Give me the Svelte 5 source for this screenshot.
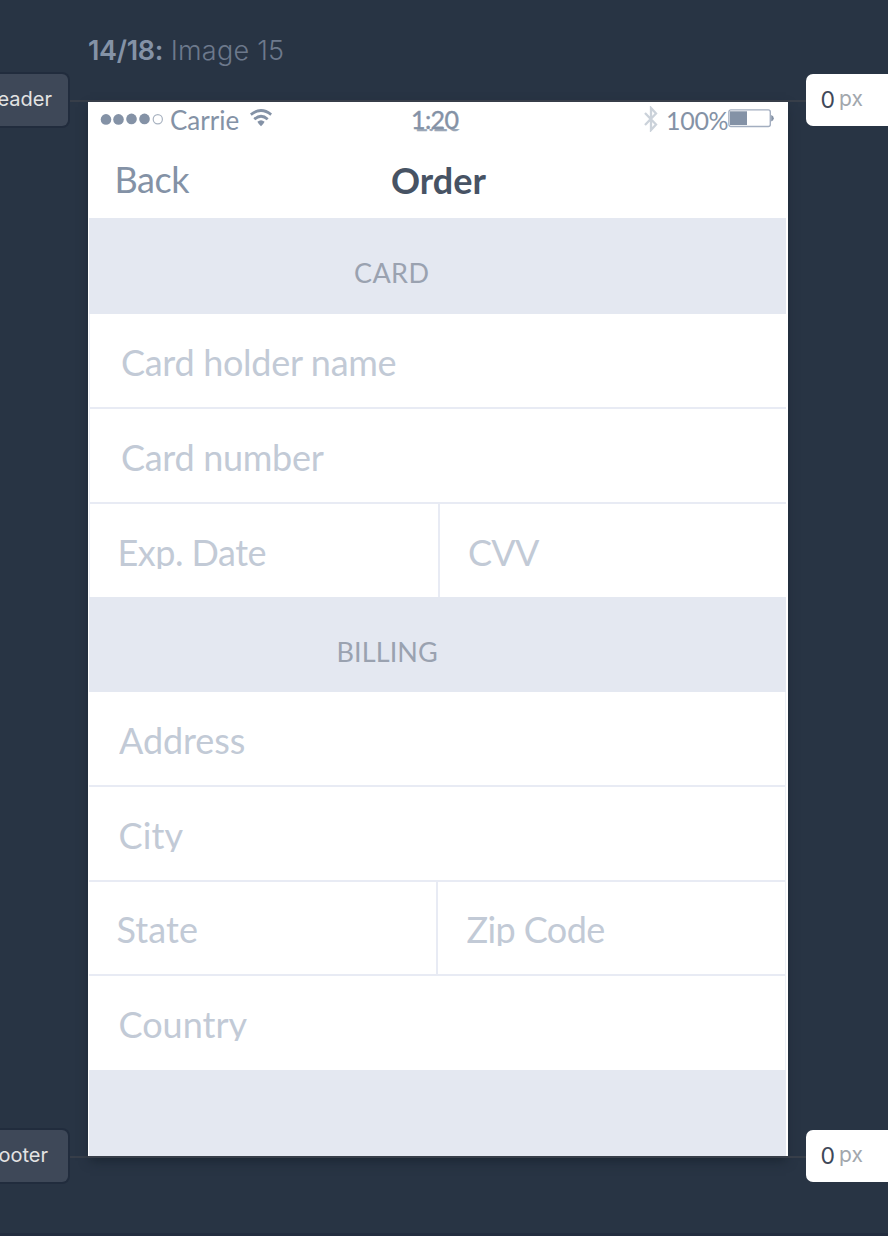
<script>
  const card = [
    [{ t: 'Card holder name', x: 31, s: -0.3 }],
    [{ t: 'Card number', x: 31, s: -0.3 }],
    [{ t: 'Exp. Date', x: 27.5, s: -0.5 }, { t: 'CVV', x: 28, s: -0.7 }]
  ];
  const billing = [
    [{ t: 'Address', x: 30, s: -0.1 }],
    [{ t: 'City', x: 29.5, s: 0.1 }],
    [{ t: 'State', x: 27.5, s: 0.1 }, { t: 'Zip Code', x: 28.5, s: -0.6 }],
    [{ t: 'Country', x: 29.5, s: 0 }]
  ];
</script>

{#snippet fields(rows)}
  {#each rows as row}
    <div class="row">
      {#each row as f}
        <div class="cell" style="padding-left:{f.x}px;letter-spacing:{f.s}px"><span>{f.t}</span></div>
      {/each}
    </div>
  {/each}
{/snippet}

<main>
  <aside class="left">
    <div class="mark"><div class="tag">Header</div><i></i></div>
    <div class="mark"><div class="tag foot">Footer</div><i></i></div>
  </aside>

  <section class="center">
    <h1><b>14/18:</b> <span>Image 15</span></h1>
    <div class="screen">
      <div class="status">
        <svg class="dots" width="64" height="14" viewBox="0 0 64 14">
          <circle cx="6" cy="7.4" r="5.3" /><circle cx="18.5" cy="7.4" r="5.3" />
          <circle cx="31.5" cy="6.9" r="5.3" /><circle cx="44.5" cy="6.9" r="5.3" />
          <circle class="ring" cx="57.8" cy="7.2" r="4.6" />
        </svg>
        <span class="carrier">Carrie</span>
        <svg class="wifi" width="22" height="18" viewBox="0 0 22 18">
          <path d="M.8 5.6Q11-2.6 21.2 5.6" /><path d="M4.3 10.2Q11 4.4 17.7 10.2" />
          <path class="fill" d="M7.4 12.8Q11 9.6 14.6 12.8Q13.6 15 11 17.2Q8.4 15 7.4 12.8Z" />
        </svg>
        <span class="time">1:20</span>
        <svg class="bt" width="14" height="26" viewBox="0 0 14 26">
          <path d="M1 7L12 18.5L7 24V2L12 7.5L1 19" />
        </svg>
        <span class="pct">100%</span>
        <svg class="bat" width="46" height="19" viewBox="0 0 46 19">
          <rect class="case" x=".9" y=".9" width="41.4" height="16.6" rx="2" />
          <rect class="fill" x="2" y="2.3" width="17" height="13.7" />
          <path class="fill" d="M43.2 6Q45.8 7 45.8 9.2T43.2 12.5Z" />
        </svg>
      </div>
      <nav><span class="back">Back</span><strong>Order</strong></nav>
      <h2 class="h-card">CARD</h2>
      <div class="group card">{@render fields(card)}</div>
      <h2 class="h-bill">BILLING</h2>
      <div class="group bill">{@render fields(billing)}</div>
      <div class="end"></div>
    </div>
  </section>

  <aside class="right">
    <div class="mark"><i></i><div class="box"><b>0</b><span>px</span></div></div>
    <div class="mark"><i></i><div class="box"><b>0</b><span>px</span></div></div>
  </aside>
</main>

<style>
  :global(body) { background: #283444; overflow: hidden; }
  main {
    display: grid; grid-template-columns: 88px 700px 100px;
    width: 888px; height: 1236px; box-sizing: border-box; overflow: hidden;
    font-family: Inter, sans-serif; background: #283444; border-bottom: 3px solid #232d3f;
  }
  aside { display: flex; flex-direction: column; gap: 1004px; padding-top: 74px; }
  .mark { display: flex; height: 52px; flex: none; }
  .mark i { width: 18px; height: 2px; margin-top: 26px; background: #373e49; flex: none; }
  .tag {
    width: 68px; margin-right: 2px; display: flex; justify-content: flex-end;
    box-sizing: border-box; padding-right: 16px; line-height: 50px; font-size: 20px;
    color: #e3e3e3; background: #3e4858; border-radius: 0 6px 6px 0; box-shadow: 0 0 0 2px #212c3d;
  }
  .foot { padding-right: 20px; }
  .box {
    width: 82px; box-sizing: border-box; padding-left: 14.5px; background: #fff;
    border-radius: 7px 0 0 7px; display: flex; gap: 4px; line-height: 50px; font-size: 21px;
  }
  .box b { font-weight: 400; color: #3e4858; font-size: 23px; line-height: 53px; }
  .box span { color: #a2a7ad; }
  h1 {
    margin: 0; height: 100px; font-size: 27px; line-height: 102px; font-weight: 400;
    color: #6d798c; white-space: nowrap;
  }
  h1 b { font-weight: 600; color: #8492a6; letter-spacing: -0.3px; }
  h1 span { font-weight: 350; letter-spacing: 0.25px; }
  .screen {
    height: 1054px; border-top: 2px solid #373e49; border-bottom: 2px solid #373e49;
    background: #fff; font-family: Lato, sans-serif; color: #8492a6;
    box-shadow: 0 5px 10px -2px #1b2633;
  }
  .status { display: flex; height: 36px; align-items: flex-start; padding-left: 12px; font-size: 26px; line-height: 36px; }
  .status svg { flex: none; fill: none; }
  .dots { margin-top: 10px; }
  .dots circle { fill: #8492a6; }
  .dots .ring { fill: none; stroke: #a9b3c1; stroke-width: 1.2; }
  .carrier { width: 74px; padding-left: 6px; }
  .wifi { margin: 7px 0 0 6px; stroke: #8492a6; stroke-width: 2.8; }
  .status .fill { fill: #8492a6; stroke: none; }
  .time {
    position: relative; width: 371px; padding-left: 139px; box-sizing: border-box; flex: none;
    font-size: 25px; line-height: 35px; letter-spacing: -0.6px; -webkit-text-stroke: 0.4px #8492a6;
  }
  .time::after {
    content: '1:20'; position: absolute; left: 142px; top: 2px; clip-path: inset(25px 0 0 0); opacity: .8;
  }
  .bt { margin: 4px 0 0 1px; stroke: #cbd2da; stroke-width: 2.3; }
  .pct { width: 63px; padding-left: 8px; box-sizing: border-box; margin-right: 7px; font-size: 25px; letter-spacing: -0.3px; white-space: nowrap; flex: none; }
  .bat { margin-top: 7px; }
  .case { stroke: #a3aec0; stroke-width: 1.4; }
  nav { display: flex; height: 80px; font-size: 36px; line-height: 84px; }
  .back { width: 276px; padding-left: 26.5px; margin-right: .5px; letter-spacing: -0.4px; line-height: 83px; }
  nav strong { color: #475364; }
  h2 {
    margin: 0 2px 0 1px; background: #e4e8f1; font-size: 27px; font-weight: 400;
    line-height: 110px; color: #9aa2b0; box-sizing: border-box;
  }
  .h-card { height: 96px; padding-left: 265px; letter-spacing: 0.4px; }
  .h-bill { height: 95px; padding-left: 247.5px; letter-spacing: 0.1px; }
  .group { margin: 0 2px 0 1px; }
  .card { border-left: 1px solid #edf0f6; }
  .bill { border-right: 1px solid #edf0f6; }
  .row { display: flex; height: 95px; box-sizing: border-box; border-bottom: 2px solid #e8ebf4; }
  .card .row:last-child { height: 93px; border-bottom: 0; }
  .bill .row:nth-child(3) { height: 94px; }
  .bill .row:last-child { height: 94px; border-bottom: 0; }
  .cell { width: 348px; box-sizing: border-box; padding-top: 27px; color: #c2cad6; }
  .bill .cell { width: 347px; }
  .bill .row:nth-child(3) .cell { padding-top: 26px; }
  .cell + .cell { border-left: 2px solid #e8ebf4; }
  .cell span { display: block; height: 38px; overflow: hidden; white-space: nowrap; font-size: 36px; line-height: 43px; }
  .end { height: 86px; margin: 0 2px 0 1px; background: #e4e8f1; }
</style>
